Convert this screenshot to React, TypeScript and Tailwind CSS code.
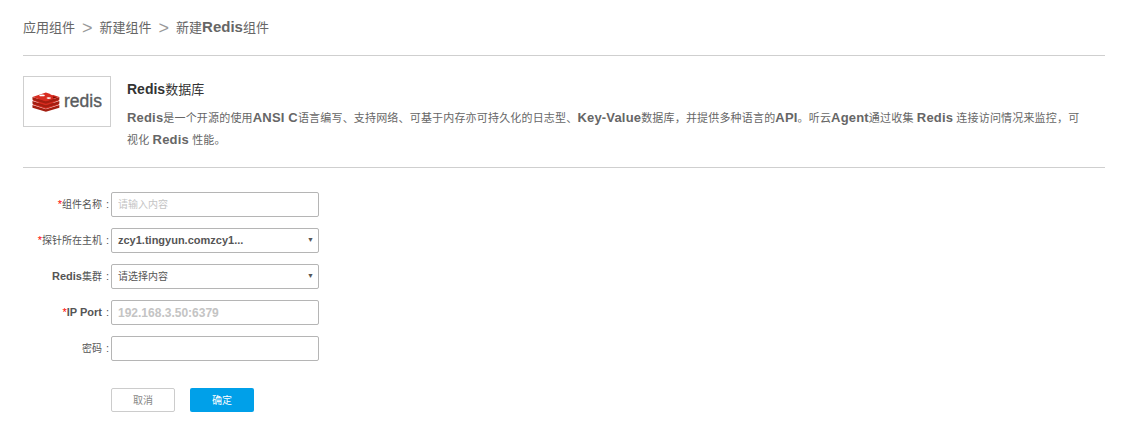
const font = { fontFamily: '"Liberation Sans", "Noto Sans CJK SC", sans-serif' };

function RedisLogo() {
  return (
    <svg width="70" height="20" viewBox="0 0 70 20" className="block">
      <g transform="translate(-0.5 0.5) scale(0.96 0.8)">
        <path d="M1 15.5 L15 21 L29 15.5 L29 19 L15 24 L1 19 Z" fill="#a41e11" />
        <path d="M1 15 L15 9.5 L29 15 L15 20.5 Z" fill="#d82c20" />
        <path d="M1 10.5 L15 16 L29 10.5 L29 14 L15 19 L1 14 Z" fill="#a41e11" />
        <path d="M1 10 L15 4.5 L29 10 L15 15.5 Z" fill="#d82c20" />
        <path d="M1 5.5 L15 11 L29 5.5 L29 9 L15 14 L1 9 Z" fill="#a41e11" />
        <path d="M1 5.5 L15 0 L29 5.5 L15 11 Z" fill="#d82c20" />
        <ellipse cx="11" cy="3.6" rx="3" ry="1.2" fill="#fff" />
        <ellipse cx="18" cy="7" rx="2.4" ry="1" fill="#fff" />
        <path d="M19 2 L23 1.6 L22 3.4 Z" fill="#fff" />
        <path d="M22 5 L26.5 5.5 L23 7.6 Z" fill="#7a0c00" />
      </g>
      <text x="32" y="15" fontSize="17.5" fill="#5a5c5e" stroke="#5a5c5e" strokeWidth="0.35" style={font}>redis</text>
    </svg>
  );
}

function B({ children, className = "text-[13px]" }: { children: React.ReactNode; className?: string }) {
  return <span className={`font-bold ${className}`}>{children}</span>;
}

function Row({ label, required, children }: { label: React.ReactNode; required?: boolean; children: React.ReactNode }) {
  return (
    <div className="flex items-center h-[25px]">
      <label className="w-[88px] pr-[2px] text-right text-[10px] text-[#555] whitespace-nowrap">
        {required && <span className="text-[11px] text-[#ff0000]">*</span>}
        {label}
        <span className="ml-[4px] text-[11px]">:</span>
      </label>
      {children}
    </div>
  );
}

function Select({ value, className }: { value: string; className: string }) {
  return (
    <div className={`w-[208px] h-[25px] border border-[#b5b5b5] rounded-[2px] flex items-center justify-between pl-[6px] pr-[4px] text-[#555] ${className}`}>
      <span>{value}</span>
      <span className="text-[7px] font-normal text-[#555]">▼</span>
    </div>
  );
}

function Input({ placeholder, className = "text-[10px]" }: { placeholder?: string; className?: string }) {
  return (
    <input
      placeholder={placeholder}
      style={font}
      className={`w-[208px] h-[25px] border border-[#b5b5b5] rounded-[2px] px-[6px] text-[#444] placeholder:text-[#c4c4c4] bg-white outline-none ${className}`}
    />
  );
}

export default function App() {
  return (
    <div style={font} className="w-[1130px] h-[432px] bg-white pl-[23px] pr-[25px] overflow-hidden">
      <div className="h-[56px] border-b border-[#cfcfcf] flex items-center text-[13px] text-[#666]">
        <span>应用组件</span>
        <span className="text-[18px] leading-none text-[#999] ml-[7px] mr-[7px]">&gt;</span>
        <span>新建组件</span>
        <span className="text-[18px] leading-none text-[#999] ml-[7px] mr-[7px]">&gt;</span>
        <span>新建<B className="text-[15px]">Redis</B>组件</span>
      </div>

      <div className="h-[112px] border-b border-[#cfcfcf] flex pt-[20px]">
        <div className="w-[88px] h-[51px] border border-[#cfcfcf] flex items-center justify-center shrink-0">
          <RedisLogo />
        </div>
        <div className="ml-[16px] w-[955px]">
          <div className="text-[13px] leading-[20px] text-[#333] mt-[3px]">
            <B className="text-[14px]">Redis</B>数据库
          </div>
          <p className="mt-[7px] text-[11px] tracking-[0.18px] leading-[21px] text-[#666]">
            <B>Redis</B>是一个开源的使用<B>ANSI C</B>语言编写、支持网络、可基于内存亦可持久化的日志型、<B>Key-Value</B>数据库，并提供多种语言的<B>API</B>。听云<B>Agent</B>通过收集 <B>Redis</B> 连接访问情况来监控，可视化 <B>Redis</B> 性能。
          </p>
        </div>
      </div>

      <div className="pt-[24px] flex flex-col gap-[11px]">
        <Row label="组件名称" required><Input placeholder="请输入内容" /></Row>
        <Row label="探针所在主机" required><Select value="zcy1.tingyun.comzcy1..." className="text-[11px] font-bold" /></Row>
        <Row label={<span><B className="text-[11px]">Redis</B>集群</span>}><Select value="请选择内容" className="text-[10px]" /></Row>
        <Row label={<B className="text-[11px]">IP Port</B>} required><Input placeholder="192.168.3.50:6379" className="text-[12px] font-bold" /></Row>
        <Row label="密码"><Input /></Row>
      </div>

      <div className="flex gap-[15px] ml-[88px] mt-[27px]">
        <button style={font} className="w-[64px] h-[24px] border border-[#ccc] rounded-[2px] bg-white text-[10px] text-[#888]">取消</button>
        <button style={font} className="w-[64px] h-[24px] rounded-[2px] bg-[#00a0e9] text-[10px] text-white">确定</button>
      </div>
    </div>
  );
}
